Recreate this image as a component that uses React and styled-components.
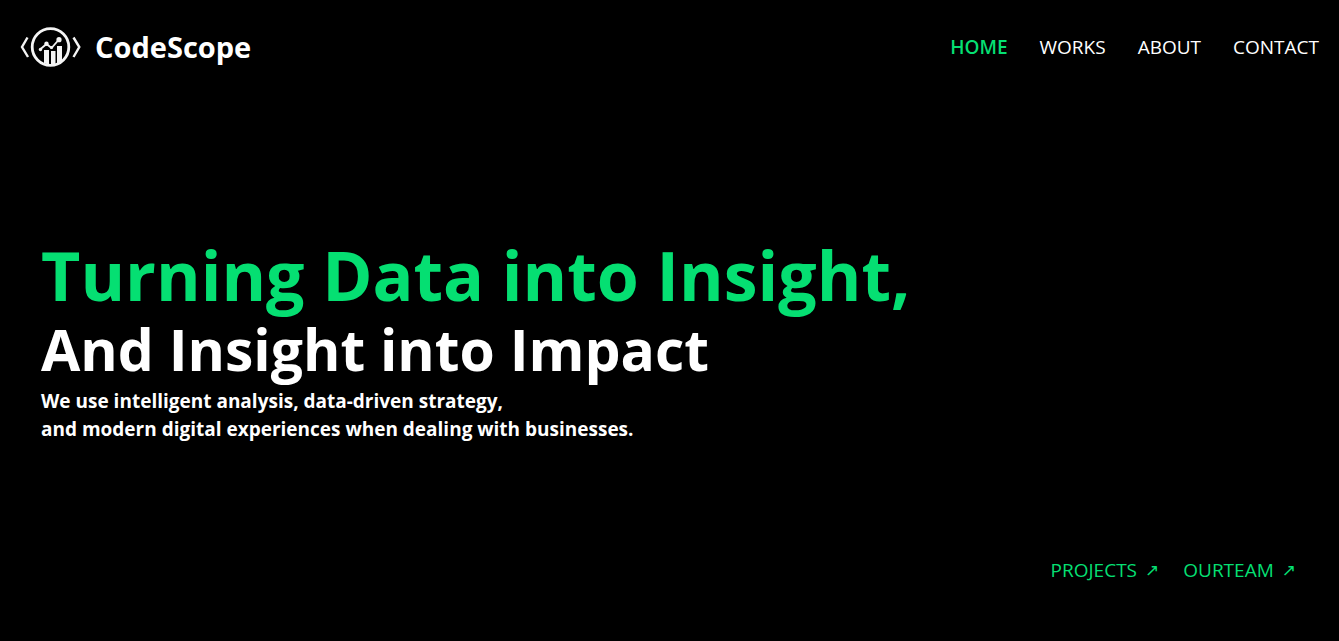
import React from "react";
import styled, { createGlobalStyle } from "styled-components";

const GlobalStyle = createGlobalStyle`
  *, *::before, *::after { box-sizing: border-box; }
  body {
    margin: 0;
    background: #000;
    color: #fff;
    font-family: "Segoe UI", "Open Sans", "Noto Sans", sans-serif;
  }
  h1, p { margin: 0; }
`;

const Page = styled.div`
  min-height: 100vh;
  display: flex;
  flex-direction: column;
`;

const Header = styled.header`
  display: flex;
  align-items: center;
  justify-content: space-between;
  padding: 16px 20px;
`;

const Brand = styled.a`
  display: flex;
  align-items: center;
  gap: 13px;
  color: #fff;
  text-decoration: none;
  font-size: 29px;
  line-height: 36px;
  font-weight: 700;
`;

const LogoMark = styled.svg`
  width: 62px;
  height: 62px;
  flex: none;
`;

const Nav = styled.nav`
  display: flex;
  gap: 32px;
`;

const NavLink = styled.a`
  color: ${(p) => (p.$active ? "#05df72" : "#fff")};
  font-size: 19px;
  line-height: 28px;
  font-weight: ${(p) => (p.$active ? 600 : 400)};
  text-decoration: none;
`;

const Hero = styled.main`
  flex: 1;
  display: flex;
  flex-direction: column;
  justify-content: center;
  padding: 32px 41px 0;
`;

const Headline = styled.h1`
  font-weight: 700;
`;

const HeadlineRow = styled.span`
  display: block;
  color: ${(p) => (p.$accent ? "#05df72" : "#fff")};
  font-size: ${(p) => (p.$accent ? 68 : 57)}px;
  line-height: ${(p) => (p.$accent ? 72 : 76)}px;
`;

const Lead = styled.p`
  font-size: 19px;
  line-height: 28px;
  font-weight: 700;
`;

const Footer = styled.footer`
  display: flex;
  justify-content: flex-end;
  gap: 24px;
  padding: 0 43px 57px;
`;

const ActionLink = styled.a`
  display: flex;
  gap: 8px;
  color: #05df72;
  font-size: 19px;
  line-height: 28px;
  text-decoration: none;
`;

const Arrow = styled.span`
  font-family: "DejaVu Sans", sans-serif;
  font-size: 17px;
`;

function Logo() {
  return (
    <LogoMark viewBox="0 0 62 62" fill="none" stroke="#f4f4f4" aria-hidden="true">
      <circle cx="30.5" cy="31" r="18.3" strokeWidth="2.8" />
      <path d="M7.5 21.5 2 31 8 41" strokeWidth="2.4" />
      <path d="M53.5 21.5 59.3 31 53.5 41" strokeWidth="2.4" />
      <path d="M20 33.5 26.5 28 31.5 32 38.5 24" strokeWidth="1.8" />
      <g fill="#f4f4f4" stroke="none">
        <circle cx="20.5" cy="33.5" r="1.7" />
        <circle cx="26.5" cy="27.8" r="2.2" />
        <circle cx="31.5" cy="31.5" r="1.6" />
        <circle cx="39" cy="23.7" r="2.6" />
        <path d="M24 34h5v15l-5-2z" />
        <path d="M31 35h4.5v14H31z" />
        <path d="M37 30h5v16l-5 2z" />
      </g>
    </LogoMark>
  );
}

const navItems = ["HOME", "WORKS", "ABOUT", "CONTACT"];
const actions = ["PROJECTS", "OURTEAM"];

export default function App() {
  return (
    <Page>
      <GlobalStyle />
      <Header>
        <Brand href="#home">
          <Logo />
          CodeScope
        </Brand>
        <Nav>
          {navItems.map((item, i) => (
            <NavLink key={item} href={`#${item.toLowerCase()}`} $active={i === 0}>
              {item}
            </NavLink>
          ))}
        </Nav>
      </Header>
      <Hero>
        <Headline>
          <HeadlineRow $accent>Turning Data into Insight,</HeadlineRow>
          <HeadlineRow>And Insight into Impact</HeadlineRow>
        </Headline>
        <Lead>
          We use intelligent analysis, data-driven strategy,
          <br />
          and modern digital experiences when dealing with businesses.
        </Lead>
      </Hero>
      <Footer>
        {actions.map((item) => (
          <ActionLink key={item} href={`#${item.toLowerCase()}`}>
            {item}
            <Arrow>↗</Arrow>
          </ActionLink>
        ))}
      </Footer>
    </Page>
  );
}
